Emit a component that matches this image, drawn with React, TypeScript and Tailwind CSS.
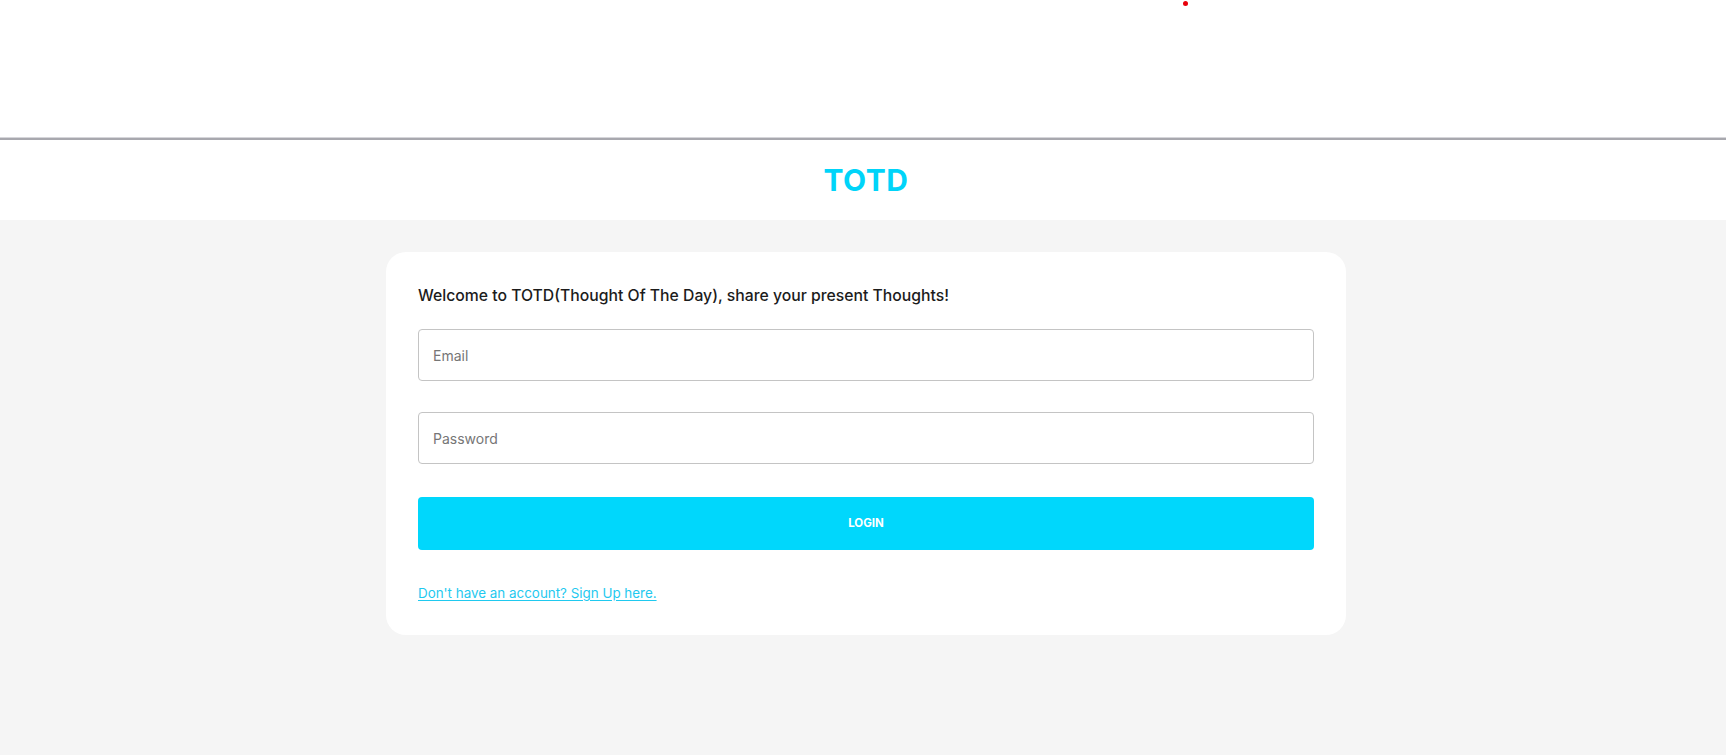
import { useState } from 'react';

export default function App() {
  const [email, setEmail] = useState('');
  const [password, setPassword] = useState('');

  return (
    <div className="relative min-h-[755px] bg-[#f5f5f5] font-['Inter','Noto_Sans',sans-serif] text-[#1c1c1c]">
      {/* stray marker dot in the top bar */}
      <span className="absolute left-[1183px] top-[1px] h-[5px] w-[5px] rounded-full bg-[#e8000b]" />

      <div className="h-[137px] bg-white" />
      <div className="h-px bg-[#d6d6da]" />
      <div className="h-[2px] bg-[#a8a8ae]" />

      <header className="flex h-[80px] items-center justify-center bg-white pl-[6px]">
        <h1 className="text-[30px] font-bold leading-none tracking-[0.5px] text-[#00d4f9]">TOTD</h1>
      </header>

      <main className="flex justify-center pl-[6px] pt-[32px]">
        <div className="w-[960px] rounded-[20px] bg-white p-[32px]">
          <p className="text-[15.75px] font-medium leading-[24px]">
            Welcome to TOTD(Thought Of The Day), share your present Thoughts!
          </p>

          <form className="mt-[21px] flex flex-col" onSubmit={(e) => e.preventDefault()}>
            <input
              type="email"
              placeholder="Email"
              value={email}
              onChange={(e) => setEmail(e.target.value)}
              className="h-[52px] rounded-[4px] border border-[#c4c4c4] px-[14px] text-[14px] outline-none placeholder:text-[#767676]"
            />
            <input
              type="password"
              placeholder="Password"
              value={password}
              onChange={(e) => setPassword(e.target.value)}
              className="mt-[31px] h-[52px] rounded-[4px] border border-[#c4c4c4] px-[14px] text-[14px] outline-none placeholder:text-[#767676]"
            />
            <button
              type="submit"
              className="mt-[33px] h-[53px] rounded-[4px] bg-[#00d7fc] text-[11.5px] font-bold uppercase text-white"
            >
              Login
            </button>
          </form>

          <div className="mt-[32px] leading-[20px]">
            <a href="#" className="text-[13.4px] text-[#1fc9ef] underline underline-offset-2">
              Don't have an account? Sign Up here.
            </a>
          </div>
        </div>
      </main>
    </div>
  );
}
